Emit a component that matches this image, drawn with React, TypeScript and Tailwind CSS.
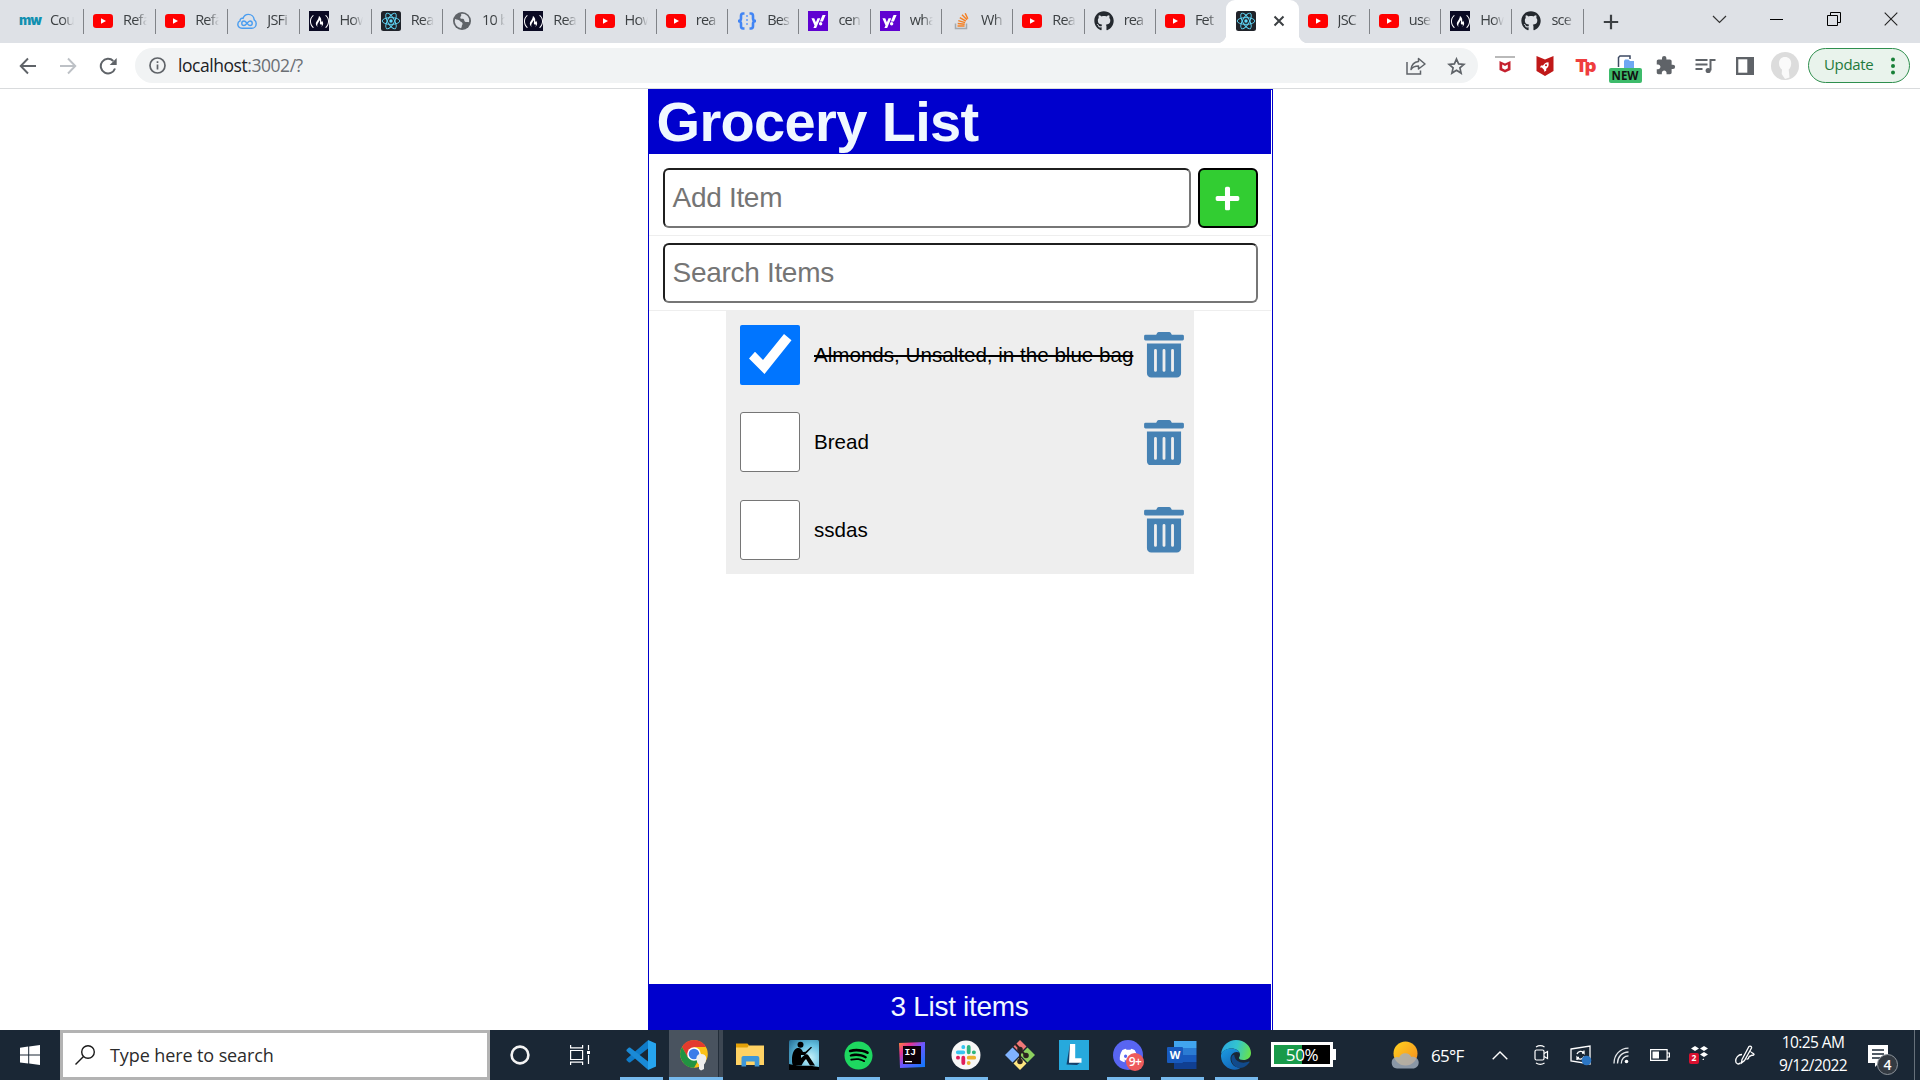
import React from "react";
import { FaGithub, FaTrashAlt, FaPlus, FaDiscord, FaSpotify, FaYahoo } from "react-icons/fa";
import { MdExtension } from "react-icons/md";
import { SiFreecodecamp } from "react-icons/si";

type IconKind =
  | "mw" | "youtube" | "jsfiddle" | "fcc" | "react" | "globe" | "braces" | "yahoo" | "stack" | "github";

const TABS: { icon: IconKind; title: string; active?: boolean; noLine?: boolean }[] = [
  { icon: "mw", title: "Cou" },
  { icon: "youtube", title: "Refa" },
  { icon: "youtube", title: "Refa" },
  { icon: "jsfiddle", title: "JSFi" },
  { icon: "fcc", title: "How" },
  { icon: "react", title: "Rea" },
  { icon: "globe", title: "10 b" },
  { icon: "fcc", title: "Rea" },
  { icon: "youtube", title: "How" },
  { icon: "youtube", title: "rea" },
  { icon: "braces", title: "Bes" },
  { icon: "yahoo", title: "cen" },
  { icon: "yahoo", title: "wha" },
  { icon: "stack", title: "Wh" },
  { icon: "youtube", title: "Rea" },
  { icon: "github", title: "rea" },
  { icon: "youtube", title: "Fet", noLine: true },
  { icon: "react", title: "", active: true },
  { icon: "youtube", title: "JSC" },
  { icon: "youtube", title: "use" },
  { icon: "fcc", title: "How" },
  { icon: "github", title: "sce" },
];

function Favicon({ kind }: { kind: IconKind }) {
  switch (kind) {
    case "mw":
      return (
        <span className="flex h-5 w-5 items-center justify-center font-[Inter,sans-serif] text-[13px] font-black tracking-[-0.8px] text-[#1290b0]">
          mw
        </span>
      );
    case "youtube":
      return (
        <svg width="20" height="20" viewBox="0 0 20 20">
          <rect x="0" y="3" width="20" height="14" rx="3.2" fill="#ff0000" />
          <path d="M8 7.2v5.6l5-2.8z" fill="#fff" />
        </svg>
      );
    case "jsfiddle":
      return (
        <svg width="20" height="20" viewBox="0 0 20 20" fill="none" stroke="#4a9df0" strokeWidth="1.4">
          <path d="M5 17.3C2.200 17.300.8 15.400.8 13.300c0-1.700 1-2.900 2.300-3.400-.3-1.800 1.300-3.100 2.900-2.500C7 4.700 9 3.400 11.300 3.400c3.300 0 5.700 2.400 5.900 5.500 1.300.7 2 1.900 2 3.500 0 2.800-1.900 4.900-4.500 4.900z" />
          <path d="M10 12.200C8.900 10.900 8.200 10 7 10a2.200 2.200 0 0 0 0 4.500c2.400 0 3.600-4.500 6-4.500a2.200 2.200 0 0 1 0 4.500c-1.200 0-1.900-1-3-2.300z" />
        </svg>
      );
    case "fcc":
      return (
        <span className="flex h-5 w-5 items-center justify-center bg-[#0a0a23] text-white">
          <SiFreecodecamp size={19} />
        </span>
      );
    case "react":
      return (
        <svg width="20" height="20" viewBox="0 0 20 20" fill="none" stroke="#61dafb" strokeWidth="0.9">
          <rect width="20" height="20" rx="2.500" fill="#20232a" stroke="none" />
          <ellipse cx="10" cy="10" rx="8.800" ry="3.400" />
          <ellipse cx="10" cy="10" rx="8.800" ry="3.400" transform="rotate(60 10 10)" />
          <ellipse cx="10" cy="10" rx="8.800" ry="3.400" transform="rotate(120 10 10)" />
          <circle cx="10" cy="10" r="1.700" fill="#61dafb" stroke="none" />
        </svg>
      );
    case "globe":
      return (
        <svg width="20" height="20" viewBox="0 0 20 20">
          <circle cx="10" cy="10" r="9" fill="#5f6368" />
          <path d="M3 8c2 1 4 .5 5 2 .8 1.300 2 .8 2.500 2.200.4 1.500-1 2-.8 3.800l-.7 1.200A7.300 7.300 0 0 1 3 8zM9 3c3-.8 6.500.8 7.800 4.200.5 1.500.4 2.800.2 4-1.500-.8-3 .3-4.200-.8-1-1-.2-2.400-1.800-2.700-1.300-.2-2.600.3-2.700-1C8.200 5.300 10 5 9 3z" fill="#dee1e6" />
        </svg>
      );
    case "braces":
      return (
        <svg width="20" height="20" viewBox="0 0 20 20" fill="none" stroke="#4285f4" strokeWidth="2.600">
          <path d="M7.500 2.500H6C4.500 2.500 4 3.500 4 5v2.500C4 9 3 10 1 10c2 0 3 1 3 2.500V15c0 1.500.5 2.500 2 2.500h1.500M12.500 2.500H14c1.500 0 2 1 2 2.500v2.500C16 9 17 10 19 10c-2 0-3 1-3 2.500V15c0 1.500-.5 2.500-2 2.500h-1.500" />
          <path d="M10 4v12" strokeWidth="2" strokeDasharray="2 2" stroke="#7eacf8" />
        </svg>
      );
    case "yahoo":
      return (
        <span className="flex h-5 w-5 items-center justify-center bg-[#5f01d1] text-white">
          <FaYahoo size={15} />
        </span>
      );
    case "stack":
      return (
        <svg width="20" height="20" viewBox="0 0 20 20" fill="none">
          <path d="M4.500 12.500V17.500H15.500V12.500" stroke="#a4a9ad" strokeWidth="1.500" />
          <g stroke="#f48024" strokeWidth="1.500">
            <path d="M6.500 15H13.600M6.700 12.400L13.700 13.200M7.300 9.600L14.100 11.600M8.800 6.600L14.900 10.200M11 3.800L16 8.800M14.200 2.200L16.800 7.800" />
          </g>
        </svg>
      );
    case "github":
      return <FaGithub size={20} color="#24292f" />;
  }
}

function TabStrip() {
  return (
    <div className="flex h-[43px] bg-[#dee1e6]">
      <div className="flex w-[1584px] shrink-0 pl-3">
        {TABS.map((t, i) =>
          t.active ? (
            <div key={i} className="relative flex w-[71.300px] shrink-0 items-center">
              <div className="absolute inset-y-0 -left-px w-[73px] rounded-t-[9px] bg-white" />
              <div className="absolute bottom-0 -left-[10px] h-[9px] w-[9px] bg-[radial-gradient(circle_at_0_0,transparent_9px,white_9.500px)]" />
              <div className="absolute bottom-0 left-[72px] h-[9px] w-[9px] bg-[radial-gradient(circle_at_100%_0,transparent_9px,white_9.500px)]" />
              <div className="relative ml-[9px] mt-[-1px]">
                <Favicon kind={t.icon} />
              </div>
              <svg className="relative ml-[17px] mt-[-1px]" width="12" height="12" viewBox="0 0 12 12" stroke="#3c4043" strokeWidth="2">
                <path d="M1.500 1.500l9 9M10.500 1.500l-9 9" />
              </svg>
            </div>
          ) : (
            <div key={i} className={`flex shrink-0 items-center ${i < 4 ? "w-[72.100px]" : "w-[71.300px]"}`}>
              <div className={`flex w-5 shrink-0 pb-px ${i === 0 ? "ml-2" : "ml-[9px]"}`}>
                <Favicon kind={t.icon} />
              </div>
              <div className="ml-2.5 w-[23.500px] shrink-0 overflow-hidden whitespace-nowrap pb-1 font-['Open_Sans',sans-serif] text-[14.500px] leading-5 tracking-[-0.800px] text-[#3c4043] [mask-image:linear-gradient(to_right,black_55%,transparent)]">
                {t.title}
              </div>
              {!t.noLine && <div className="ml-auto h-[25px] w-px bg-[#808388]" />}
            </div>
          ),
        )}
      </div>
      <div className="flex w-[54px] items-center justify-center">
        <svg width="16" height="16" viewBox="0 0 16 16" stroke="#3c4043" strokeWidth="2.200">
          <path d="M8 .8v14.400M.8 8h14.400" />
        </svg>
      </div>
      <div className="ml-auto flex h-[38px] items-center pr-px">
        <div className="flex w-[57px] justify-center">
          <svg width="15" height="9" viewBox="0 0 15 9" fill="none" stroke="#333" strokeWidth="1.200"><path d="M1 1l6.500 6.500L14 1" /></svg>
        </div>
        <div className="flex w-[57px] justify-center">
          <div className="h-px w-[13px] bg-black" />
        </div>
        <div className="flex w-[57px] justify-center">
          <svg width="14" height="14" viewBox="0 0 14 14" fill="none" stroke="#000"><path d="M.5 3.500h10v10H.5zM3.500 3.500V.5h10v10h-3" /></svg>
        </div>
        <div className="flex w-[57px] justify-center">
          <svg width="14" height="14" viewBox="0 0 14 14" stroke="#222" strokeWidth="1.100"><path d="M.7.7l12.600 12.600M13.300.7L.7 13.300" /></svg>
        </div>
      </div>
    </div>
  );
}

function Cell({ children }: { children: React.ReactNode }) {
  return <div className="flex w-10 shrink-0 items-center justify-center">{children}</div>;
}

function Toolbar() {
  return (
    <div className="flex h-[46px] items-center border-b border-[#d9dbdd] bg-white pl-2">
      <Cell>
        <svg width="18" height="18" viewBox="0 0 18 18" fill="none" stroke="#5f6368" strokeWidth="1.900"><path d="M17 9H2M9 1.500L1.700 9 9 16.500" /></svg>
      </Cell>
      <Cell>
        <svg width="18" height="18" viewBox="0 0 18 18" fill="none" stroke="#bdc1c6" strokeWidth="1.900"><path d="M1 9h15M9 1.500L16.300 9 9 16.500" /></svg>
      </Cell>
      <Cell>
        <svg width="18" height="18" viewBox="0 0 18 18" fill="none" stroke="#5f6368" strokeWidth="2"><path d="M16 11.500A7.300 7.300 0 1 1 14.300 4" /><path d="M17.700 1v7h-7z" fill="#5f6368" stroke="none" /></svg>
      </Cell>
      <div className="ml-[7px] flex h-[35px] w-[1343px] shrink-0 items-center rounded-full bg-[#f1f3f4] pl-3.5">
        <svg width="17" height="17" viewBox="0 0 17 17" fill="none" stroke="#5f6368" strokeWidth="1.700"><circle cx="8.500" cy="8.500" r="7.500" /><path d="M8.500 7.500v5M8.500 4.200v1.900" /></svg>
        <div className="ml-3 font-['Open_Sans',sans-serif] text-[17.500px] tracking-[-0.450px] text-[#202124]">
          localhost<span className="text-[#6b6f74]">:3002/?</span>
        </div>
        <div className="ml-auto flex pr-0.5">
          <Cell>
            <svg width="20" height="18" viewBox="0 0 20 18" fill="none" stroke="#5f6368" strokeWidth="1.500"><path d="M1 5v12h13.500v-3.500" /><path d="M12.500 1.500L19 7l-6.500 5V9C9 9 6.500 10 5 12.500 5.500 8 8 5 12.500 4.500z" strokeLinejoin="round" /></svg>
          </Cell>
          <Cell>
            <svg width="19" height="18" viewBox="0 0 19 18" fill="none" stroke="#5f6368" strokeWidth="1.700"><path d="M9.500 2l2.100 4.900 5.300.5-4 3.500 1.200 5.200-4.600-2.800-4.600 2.800 1.200-5.200-4-3.500 5.300-.5z" /></svg>
          </Cell>
        </div>
      </div>
      <div className="ml-[7px] flex h-[35px] items-center">
        <Cell>
          <svg width="20" height="20" viewBox="0 0 20 20"><path d="M0 0h20v2H0z" fill="#b9b9b9" /><path d="M4.500 5l5.500 2.500L15.500 5v9L10 16.500 4.500 14z" fill="#c5202e" /><path d="M7.200 8.500L10 10l2.800-1.500v3.800L10 13.800l-2.800-1.500z" fill="#fff" /></svg>
        </Cell>
        <Cell>
          <svg width="18" height="20" viewBox="0 0 18 20"><path d="M.5 0L9 3.500 17.500 0v15L9 20 .5 15z" fill="#c01818" /><path d="M12.500 6.200c-3 .2-4.500 1.700-5.500 3.300H5l-1 2h1.800l2.400 2.400v1.900l2-1v-2c1.800-1.200 3-3 2.300-6.600z" fill="#fff" /><circle cx="10" cy="9.200" r="1" fill="#c01818" /></svg>
        </Cell>
        <Cell>
          <span className="font-[Inter,sans-serif] text-[18px] font-black leading-5 tracking-[-1.800px] text-[#ef3e3e]">Tp</span>
        </Cell>
        <Cell>
          <div className="relative ml-px flex h-[35px] w-[34px] justify-center pt-[7px]">
            <svg width="18" height="14" viewBox="0 0 18 14"><path d="M1.500 12V2.500L3 1h10v3" fill="none" stroke="#3d4a63" strokeWidth="1.500" /><path d="M7 6l1-1.500h3.500L13 6h4v8H7z" fill="#6fa8f2" /></svg>
            <div className="absolute bottom-0 left-0 flex h-[15px] w-[33px] items-center justify-center rounded-[2px] bg-[#3dbb6b] font-['Open_Sans',sans-serif] text-[11.500px] font-bold text-[#111]">NEW</div>
          </div>
        </Cell>
        <Cell><MdExtension size={21} color="#5f6368" /></Cell>
        <Cell>
          <svg width="21" height="18" viewBox="0 0 21 18" fill="none" stroke="#5f6368" strokeWidth="2"><path d="M.5 3h12M.5 7.500h12M.5 12h7M15.500 13.500V3h5" /><circle cx="13.200" cy="13.500" r="2.600" fill="#5f6368" stroke="none" /></svg>
        </Cell>
        <Cell>
          <svg width="18" height="18" viewBox="0 0 18 18"><path d="M0 0h18v18H0z" fill="#5f6368" /><path d="M2.300 2.300h9v13.400h-9z" fill="#fff" /></svg>
        </Cell>
        <Cell>
          <svg width="28" height="28" viewBox="0 0 28 28"><circle cx="14" cy="14" r="14" fill="#dcdcdc" /><path d="M14 5c-3.800 0-6 2.600-6 6.200 0 3.200 1.300 5 3 6.400l-.3 4.400L14 27l4.500-1.500-.8-8c1.500-1.400 2.500-3.400 2.500-6.300C20.200 7.500 17.800 5 14 5z" fill="#fafafa" /></svg>
        </Cell>
        <div className="ml-[3px] flex h-[35px] w-[102px] items-center rounded-full border-[1.500px] border-[#2f8f4e] bg-[#e9f3ec] pl-[15px] font-['Open_Sans',sans-serif] text-[15px] tracking-[-0.350px] text-[#1f7a3c]">
          <span className="pb-0.5">Update</span>
          <svg className="ml-auto mr-3.5" width="4" height="18" viewBox="0 0 4 18" fill="#188038"><circle cx="2" cy="2.500" r="2" /><circle cx="2" cy="9" r="2" /><circle cx="2" cy="15.500" r="2" /></svg>
        </div>
      </div>
    </div>
  );
}

const ITEMS = [
  { name: "Almonds, Unsalted, in the blue bag", checked: true },
  { name: "Bread", checked: false },
  { name: "ssdas", checked: false },
];

function GroceryApp() {
  return (
    <div className="mx-auto flex w-[625px] grow flex-col border-x border-t border-[#0000cd] bg-white pr-px font-['Liberation_Sans',Arial,sans-serif]">
      <h1 className="flex h-16 items-center bg-[#0000cd] pl-2 text-[56px] font-bold leading-none tracking-[-0.650px] text-[#f0f8ff]">
        Grocery List
      </h1>
      <div className="flex h-[82px] gap-[7px] border-b border-[#eee] pl-3.5 pr-[13px] pt-3.5">
        <div className="flex h-[60px] w-[528px] items-center rounded-[6px] border-2 border-b-[#767676] border-l-[#1f1f1f] border-r-[#767676] border-t-[#1f1f1f] pl-2 text-[28px] tracking-[-0.300px] text-[#757575]">
          Add Item
        </div>
        <button className="flex h-[60px] w-[60px] items-center justify-center rounded-[6px] border-2 border-black bg-[#32cd32] text-white">
          <FaPlus size={27} />
        </button>
      </div>
      <div className="h-[75px] border-b border-[#eee] pl-3.5 pr-[13px] pt-[7px]">
        <div className="flex h-[60px] items-center rounded-[6px] border-2 border-b-[#767676] border-l-[#1f1f1f] border-r-[#767676] border-t-[#1f1f1f] pl-2 text-[28px] tracking-[-0.300px] text-[#757575]">
          Search Items
        </div>
      </div>
      <ul className="ml-[77px] w-[468px] bg-[#eee]">
        {ITEMS.map((it) => (
          <li key={it.name} className="flex h-[87.600px] items-center pl-3.5 pr-2.5">
            {it.checked ? (
              <span className="flex h-[60px] w-[60px] shrink-0 items-center justify-center rounded-[2px] bg-[#0075ff]">
                <svg width="60" height="60" viewBox="0 0 60 60"><path d="M9 33.500L15 26.700 23 35 44 9 51.500 15.200 24.500 49z" fill="#fff" /></svg>
              </span>
            ) : (
              <span className="h-[60px] w-[60px] shrink-0 rounded-[3px] border border-[#767676] bg-white" />
            )}
            <span className={`ml-[14.500px] whitespace-nowrap text-[20.600px] text-black ${it.checked ? "pt-0.5 line-through" : ""}`}>{it.name}</span>
            <FaTrashAlt className="ml-auto h-[45.500px] w-10 shrink-0 text-[#4682b4]" />
          </li>
        ))}
      </ul>
      <footer className="mt-auto flex h-[46px] items-center justify-center bg-[#0000cd] text-[28px] tracking-[-0.300px] text-[#f0f8ff]">
        3 List items
      </footer>
    </div>
  );
}

function AppButton({ running, children }: { running?: boolean; children: React.ReactNode }) {
  return (
    <div className="relative flex w-[54px] shrink-0 items-center justify-center">
      {children}
      {running && <div className="absolute bottom-0 left-1.5 h-[3px] w-[43px] bg-[#76b9ed]" />}
    </div>
  );
}

function Taskbar() {
  return (
    <div className="flex h-[50px] shrink-0 bg-[#1a2735] font-['Open_Sans',sans-serif] text-white">
      <div className="flex w-[60px] shrink-0 items-center justify-center">
        <svg width="20" height="20" viewBox="0 0 20 20" fill="#fff"><path d="M0 2.700L8.200 1.600V9.500H0zM9.200 1.500L20 0V9.500H9.200zM0 10.500H8.200V18.500L0 17.400zM9.200 10.500H20V20L9.200 18.600z" /></svg>
      </div>
      <div className="flex w-[430px] shrink-0 items-center border-[3px] border-[#b3b3b3] bg-white pl-3">
        <svg width="20" height="20" viewBox="0 0 20 20" fill="none" stroke="#1a1a1a" strokeWidth="1.400"><circle cx="13" cy="7" r="6.300" /><path d="M8.500 11.500L.5 19.500" /></svg>
        <span className="ml-[15px] pt-px text-[18px] tracking-[-0.100px] text-[#2b2b2b]">Type here to search</span>
      </div>
      <div className="flex w-[60px] shrink-0 items-center justify-center">
        <svg width="20" height="20" viewBox="0 0 20 20" fill="none" stroke="#f3f3f3" strokeWidth="2.600"><circle cx="10" cy="10" r="8.400" /></svg>
      </div>
      <div className="flex w-[60px] shrink-0 items-center justify-center">
        <svg width="20" height="20" viewBox="0 0 20 20" fill="none" stroke="#fff" strokeWidth="1.200"><path d="M.6 5.500h12v9H.6zM.6 0v2.800h12V0M.6 20v-2.800h12V20M18.500 0v5M18.500 10v9" /><path d="M17 6h3v3h-3z" fill="#fff" stroke="none" /></svg>
      </div>
      <div className="w-1 shrink-0" />
      <AppButton running>
        <svg width="30" height="30" viewBox="0 0 30 30"><path d="M22 .2L1 18.500c-.8.8-.8 1.400 0 2.200l1.600 1.500c.6.500 1.200.5 1.800 0L22 8.500z" fill="#0f7bc8" /><path d="M22 29.800L1 11.500c-.8-.8-.8-1.400 0-2.200l1.600-1.500c.6-.5 1.200-.5 1.800 0L22 21.500z" fill="#1a8ad6" /><path d="M22 0L30 3.500V26.500L22 30z" fill="#26a4ef" /></svg>
      </AppButton>
      <div className="relative ml-px flex w-[54px] shrink-0 items-center bg-[#49535f] pl-[11px]">
        <svg width="29" height="32" viewBox="0 0 29 32">
          <circle cx="14" cy="15" r="13.800" fill="#fbc116" />
          <path d="M2 8.100A13.800 13.800 0 0 1 26 8.100H14L7.500 18z" fill="#e33b2e" />
          <path d="M2 8.100A13.800 13.800 0 0 0 14 28.800L20 18.500H8z" fill="#229342" />
          <circle cx="14" cy="15" r="6.800" fill="#fff" />
          <circle cx="14" cy="15" r="5.300" fill="#3b7de9" />
          <path d="M21 15c-3 0-4.800 2-4.500 5 .2 2 .8 4 2.500 5.500v4.500l2 1.500 3-1.500v-4.500c1.500-1.500 2.400-4 2.200-6.500-.2-2.500-2.200-4-5.200-4z" fill="#eee" />
        </svg>
        <div className="absolute inset-y-0 right-0 w-[5px] border-l border-[#222d39] bg-[#3d4753]" />
        <div className="absolute inset-x-0 bottom-0 h-[3px] bg-[#76b9ed]" />
      </div>
      <AppButton>
        <svg width="28" height="24" viewBox="0 0 28 24"><path d="M0 1h11.500l1.500 1.500H28V22H0z" fill="#ffd264" /><path d="M0 .5h11.500l1.300 2-1.300 2H0z" fill="#e3a008" /><path d="M5.500 23.500V15.200c0-1.500.8-2.200 2-2.200h13.800c1.200 0 2 .7 2 2.200v8.300h-4.600V18.500h-8.600v5z" fill="#3e97d8" /></svg>
      </AppButton>
      <AppButton>
        <svg width="30" height="30" viewBox="0 0 30 30"><defs><radialGradient id="kin" cx=".7" cy=".6" r=".9"><stop offset="0" stopColor="#c9f3fb" /><stop offset=".5" stopColor="#63bfdf" /><stop offset="1" stopColor="#256f97" /></radialGradient></defs><rect width="30" height="30" rx="1.500" fill="url(#kin)" /><path d="M0 24c3 1 5 .2 8 1.500 5 .8 12-.8 22 1.500v3H0z" fill="#000" /><circle cx="11.500" cy="4.800" r="3" fill="#000" /><path d="M8.500 8C4.500 9 3 14.500 3 19.500c0 3 0 5 1.500 6h8c1-2 2.500-4.500 4.500-6.500l4 6.500h5l-6.500-10c-1-1.500-2.700-1.500-4-.5L12 18v-3l4-.3 7-7.200-1-.8-5.500 5-2.500.3c-1-2.500-2.500-4.500-5.500-4z" fill="#000" /></svg>
      </AppButton>
      <AppButton running>
        <span className="flex h-[26px] w-[26px] items-center justify-center rounded-full bg-black"><FaSpotify size={29} color="#1ed760" className="shrink-0" /></span>
      </AppButton>
      <AppButton>
        <svg width="26" height="26" viewBox="0 0 26 26"><defs><linearGradient id="ij" x1="0" y1="0" x2="1" y2="1"><stop offset="0" stopColor="#fc8a3a" /><stop offset=".25" stopColor="#e9338f" /><stop offset=".5" stopColor="#6b57ff" /><stop offset="1" stopColor="#087cfa" /></linearGradient></defs><path d="M0 1l26-1v25L1 26z" fill="url(#ij)" /><path d="M4 4h18v18H4z" fill="#0b0008" /><path d="M6 19h7v1.300H6z" fill="#fff" /><text x="5.500" y="13" fill="#fff" fontFamily="Liberation Mono, monospace" fontWeight="700" fontSize="9.500">IJ</text></svg>
      </AppButton>
      <AppButton running>
        <svg width="30" height="30" viewBox="0 0 30 30" strokeWidth="3.800" strokeLinecap="round"><circle cx="15" cy="15" r="14.500" fill="#f7f7f7" /><path d="M12.300 7v.2M6.800 12.300h5.500" stroke="#36c5f0" /><path d="M17.700 7v5.300M22.800 12.300h.2" stroke="#2eb67d" /><path d="M17.700 17.700h5.500M17.700 22.800v.2" stroke="#ecb22e" /><path d="M12.300 17.700v5.300M6.900 17.700h.2" stroke="#e01e5a" /></svg>
      </AppButton>
      <AppButton>
        <svg width="30" height="30" viewBox="0 0 30 30"><path d="M15 0l6.500 6.500L15 13 8.500 6.500z" fill="#f07878" /><path d="M7.500 7.500L14 14v2l-6.500 6.500L0 15z" fill="#80b3ff" /><path d="M22.500 7.500L30 15l-7.500 7.500L16 16v-2z" fill="#8cd05f" /><path d="M15 17l6.500 6.500L15 30l-6.500-6.500z" fill="#ffe680" /><g fill="#2b2320" stroke="#2b2320" strokeWidth="2"><path d="M10.500 4l4.500 5v13M15 9.500l6 6" fill="none" /><circle cx="15" cy="9.500" r="1.800" /><circle cx="21" cy="15.500" r="1.800" /><circle cx="15" cy="21.500" r="1.800" /></g></svg>
      </AppButton>
      <AppButton>
        <svg width="30" height="30" viewBox="0 0 30 30"><path d="M0 0h30v30H0z" fill="#27a9dc" /><path d="M11 4L7.500 24.500 18 25l4-3-7-1z" fill="#15406b" /><path d="M11 4h5.200v14.200h6.300v4.600H10z" fill="#fff" /></svg>
      </AppButton>
      <AppButton running>
        <div className="relative flex h-[30px] w-[30px] items-center justify-center rounded-full bg-[#5865f2]">
          <FaDiscord size={19} />
          <div className="absolute -right-px top-[13px] flex h-[18px] w-[18px] items-center justify-center rounded-full bg-[#ed5b5b] text-[12px] font-semibold tracking-[-0.500px]">9+</div>
        </div>
      </AppButton>
      <AppButton running>
        <svg width="30" height="28" viewBox="0 0 30 28"><path d="M7 0h22.500v7H7z" fill="#41a5ee" /><path d="M7 7h22.500v7H7z" fill="#2b7cd3" /><path d="M7 14h22.500v7H7z" fill="#185abd" /><path d="M7 21h22.500v7H7z" fill="#103f91" /><rect x="0" y="6" width="16" height="16" rx="1" fill="#185abd" /><text x="8" y="18" textAnchor="middle" fill="#fff" fontFamily="Open Sans, sans-serif" fontWeight="700" fontSize="11">W</text></svg>
      </AppButton>
      <AppButton running>
        <svg width="30" height="30" viewBox="0 0 30 30"><defs><linearGradient id="eg" x1="0" y1=".3" x2="1" y2=".5"><stop offset="0" stopColor="#2aa7e0" /><stop offset=".5" stopColor="#33c4cf" /><stop offset="1" stopColor="#66e24f" /></linearGradient><linearGradient id="eb" x1="0" y1="0" x2=".6" y2="1"><stop offset="0" stopColor="#1b9de2" /><stop offset="1" stopColor="#1366b8" /></linearGradient></defs><path d="M0 14C1 5.500 7.500 0 15 0c8.500 0 15 6 15 13 0 4.500-3.500 7-7.500 7-3 0-4.500-1-4.500-2 0-1 1-1.500 1-3.500C19 11 15 8.500 10.500 8.500 5.500 8.500 1.500 11 0 14z" fill="url(#eg)" /><path d="M0 15C1 11 5 8.500 10.500 8.500c4 0 7 1.700 8 4-5-2-9 1.500-9 6 0 6 5 9.500 10.500 9 -2 1.500-4 2.200-6 2.200C6.500 29.700-.5 23.500 0 15z" fill="url(#eb)" /><path d="M10.500 17c-1 6 4 12.500 11.500 10.500 3-1 5-3 6.500-5.200.3-.5-.2-1-.8-.7-5 2.200-14 1.500-14.500-7-1.500.6-2.500 1.400-2.700 2.400z" fill="#114a8b" /></svg>
      </AppButton>
      <div className="ml-2 mt-3 flex h-[25px] shrink-0 items-center">
        <div className="flex h-[25px] w-[62px] items-center justify-center border-[3px] border-white bg-[linear-gradient(to_right,#189a4a_50%,black_50%)] text-[17px] leading-none tracking-[-0.400px]">50%</div>
        <div className="h-[11px] w-[3px] bg-white" />
      </div>
      <div className="ml-[55px] flex shrink-0 items-center">
        <svg width="28" height="28" viewBox="0 0 28 28"><defs><linearGradient id="sun" x1="0" y1="0" x2="1" y2="1"><stop offset="0" stopColor="#ffd21f" /><stop offset="1" stopColor="#f58a1f" /></linearGradient></defs><circle cx="14.500" cy="12.500" r="12" fill="url(#sun)" /><path d="M6 27.500a5.800 5.800 0 0 1-.5-11.500c1-.2 2 .1 2.700.5a6.500 6.500 0 0 1 12-.5c4-.8 7.500 2 7.500 5.500s-2.500 6-6 6z" fill="#a3b0c0" fillOpacity=".82" /></svg>
      </div>
      <div className="ml-3 flex w-[61px] shrink-0 items-center pt-0.5 text-[17px] tracking-[-0.700px]">65°F</div>
      <div className="flex w-4 shrink-0 items-center">
        <svg width="16" height="9" viewBox="0 0 16 9" fill="none" stroke="#fff" strokeWidth="1.400"><path d="M.7 8.300L8 1l7.300 7.300" /></svg>
      </div>
      <div className="ml-[22px] flex w-6 shrink-0 items-center justify-center">
        <svg width="16" height="20" viewBox="0 0 16 20" fill="none" stroke="#fff" strokeWidth="1.200"><rect x="1" y="5" width="9" height="10" rx="1.500" /><path d="M10 8.500l3.500-2v7l-3.500-2M2 2C4.500.5 8 .5 10.500 2M2 18c2.500 1.500 6 1.500 8.500 0" /></svg>
      </div>
      <div className="ml-[15px] flex w-6 shrink-0 items-center justify-center">
        <svg width="22" height="21" viewBox="0 0 22 21" fill="none" stroke="#fff" strokeWidth="1.300"><path d="M1 4L20 1v18L1 16z" /><path d="M7 9a4 4 0 0 1 7-1V5.500M14.500 8H12M14 11.500a4 4 0 0 1-7 1V15M6.500 12.500H9" /><circle cx="16.500" cy="15.500" r="4.800" fill="#2c76c4" stroke="none" /></svg>
      </div>
      <div className="ml-4 flex w-6 shrink-0 items-center justify-center">
        <svg width="16" height="17" viewBox="0 0 16 17" fill="none" stroke="#e6e9ec" strokeWidth="1.300"><path d="M1 16.500C1 8 7 1.200 15.500 1.200M4.500 16.500C4.500 10 9 5 15.500 5M8.300 16.500c0-4.500 3-7.700 7.200-7.700" /><circle cx="13.500" cy="14.500" r="1.800" fill="#fff" stroke="none" /></svg>
      </div>
      <div className="ml-[15px] flex w-6 shrink-0 items-center justify-center">
        <svg width="20" height="12" viewBox="0 0 20 12" fill="none" stroke="#fff" strokeWidth="1.200"><path d="M.6.6h16.500v10.800H.6zM17.500 4h1.900v4h-1.900" /><path d="M2.500 2.500h6.500v7H2.500z" fill="#fff" stroke="none" /></svg>
      </div>
      <div className="ml-[15px] flex w-6 shrink-0 items-center justify-center">
        <div className="relative h-[18px] w-5">
          <svg width="20" height="16" viewBox="0 0 20 16" fill="#fff"><path d="M6 0l4 2.500L6 5 2 2.500zM15 0l4 2.500L15 5l-4-2.500zM15 6l4 2.500-4 2.500-4-2.500zM13 13.500l2-1v1.500z" /></svg>
          <div className="absolute left-0 top-[7px] flex h-[11px] w-[10px] items-center justify-center rounded-[2px] bg-[#d9102f] text-[8.500px] font-bold leading-none">2</div>
        </div>
      </div>
      <div className="ml-[22px] flex w-6 shrink-0 items-center justify-center">
        <svg width="20" height="20" viewBox="0 0 20 20" fill="none" stroke="#fff" strokeWidth="1.300"><path d="M7 14.500L14 1.500c1-1 3 0 2.500 1.500L9.500 15.500l-3 2.500zM7 9.500C3 9.500.7 13 .7 16c0 3.500 3.500 3.800 4.800 1.500M11.500 14c3 1 1.500-3.500 4-3 1-1.500 3 0 3.500-1.500.5-1-2.500-1.500-3.500-3" /></svg>
      </div>
      <div className="ml-[5px] flex w-[102px] shrink-0 flex-col items-center pt-px text-[15.500px] leading-[23px] tracking-[-0.600px]">
        <span>10:25 AM</span>
        <span>9/12/2022</span>
      </div>
      <div className="relative ml-1 h-[50px] w-[32px] shrink-0">
        <svg className="mt-[14px]" width="32" height="32" viewBox="0 0 32 32"><path d="M0 1h20v18H11l-4 4v-4H0z" fill="#fff" /><path d="M4 6h12M4 10h12M4 14h8" stroke="#1a2735" strokeWidth="1.300" /></svg>
        <div className="absolute left-[9px] top-[24px] flex h-[21px] w-[21px] items-center justify-center rounded-full border border-[#8d949b] bg-[#333a42] text-[14px] font-semibold leading-none">4</div>
      </div>
      <div className="ml-auto mr-[5px] h-full w-px bg-[#66707a]" />
    </div>
  );
}

export default function App() {
  return (
    <div className="flex h-[1080px] w-[1920px] flex-col overflow-hidden bg-white">
      <TabStrip />
      <Toolbar />
      <GroceryApp />
      <Taskbar />
    </div>
  );
}
